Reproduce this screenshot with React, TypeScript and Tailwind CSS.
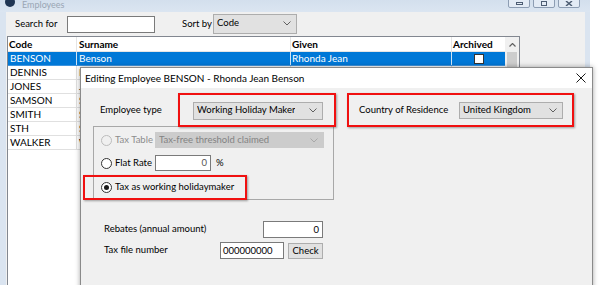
import React from 'react';

const Chevron = ({ color = '#606060' }: { color?: string }) => (
  <svg width="8" height="5" viewBox="0 0 8 5" className="shrink-0">
    <path d="M0.5 0.5 L4 4 L7.5 0.5" fill="none" stroke={color} strokeWidth="1" />
  </svg>
);

const Combo = ({
  value,
  className,
  disabled,
}: {
  value: string;
  className: string;
  disabled?: boolean;
}) => (
  <div
    className={`flex items-center justify-between border pl-[3px] pr-[5px] ${
      disabled
        ? 'border-[#cccccc] bg-[#cccccc] text-[#838383]'
        : 'border-[#adadad] bg-[#e1e1e1] text-black'
    } ${className}`}
  >
    <span className="truncate">{value}</span>
    <Chevron color={disabled ? '#a8a8a8' : '#606060'} />
  </div>
);

const Radio = ({ checked, disabled }: { checked?: boolean; disabled?: boolean }) => (
  <span
    className={`flex h-[11px] w-[11px] shrink-0 items-center justify-center rounded-full border ${
      disabled ? 'border-[#bcbcbc] bg-[#f0f0f0]' : 'border-[#333333] bg-white'
    }`}
  >
    {checked && <span className="h-[5px] w-[5px] rounded-full bg-[#1a1a1a]" />}
  </span>
);

const rows = [
  { code: 'BENSON', surname: 'Benson', given: 'Rhonda Jean' },
  { code: 'DENNIS', surname: 'Dennis', given: '' },
  { code: 'JONES', surname: 'Jones', given: '' },
  { code: 'SAMSON', surname: 'Samson', given: '' },
  { code: 'SMITH', surname: 'Smith', given: '' },
  { code: 'STH', surname: 'Sth', given: '' },
  { code: 'WALKER', surname: 'Walker', given: '' },
];

const App = () => {
  return (
    <div className="relative h-[285px] w-[602px] overflow-hidden bg-white font-['Lato',sans-serif] text-[9.5px] text-black">
      {/* Employees window */}
      <div className="flex h-full w-[590px] flex-col bg-[#dae4f0]">
        <div className="flex h-[12px] items-start overflow-hidden bg-gradient-to-b from-[#d3dfed] to-[#dbe5f1]">
          <span className="-mt-[3px] ml-[5px] h-[10px] w-[10px] rounded-full bg-[#1f3553]" />
          <span className="ml-[7px] text-[9px] leading-[9px] text-[#9aa6b4]">Employees</span>
          <div className="-mt-[2px] ml-auto mr-[10px] flex gap-[3px]">
            <div className="flex h-[10px] w-[22px] items-end justify-center rounded-b-[2px] border border-[#8d9db3] bg-[#e3ebf5] pb-[2px]">
              <span className="h-[3px] w-[7px] border border-[#4d5d73]" />
            </div>
            <div className="flex h-[10px] w-[22px] items-end justify-center rounded-b-[2px] border border-[#8d9db3] bg-[#e3ebf5] pb-[1px]">
              <span className="h-[5px] w-[6px] border border-[#4d5d73]" />
            </div>
            <div className="flex h-[10px] w-[22px] items-end justify-center rounded-b-[2px] border border-[#8d9db3] bg-[#e3ebf5] pb-[1px]">
              <svg width="8" height="5" viewBox="0 0 8 5">
                <path d="M1 0 L7 5 M7 0 L1 5" stroke="#4d5d73" strokeWidth="1.5" />
              </svg>
            </div>
          </div>
        </div>
        <div className="ml-[6px] mr-[5px] flex flex-1 flex-col bg-[#f0f0f0]">
          <div className="flex h-[24px] items-center">
            <span className="ml-[9px] w-[52px]">Search for</span>
            <div className="h-[17px] w-[88px] border border-[#7a7a7a] bg-white" />
            <span className="ml-[27px] w-[31px]">Sort by</span>
            <Combo value="Code" className="-mt-[1px] h-[20px] w-[84px]" />
          </div>
          <div className="ml-[1px] flex w-[513px] flex-1 border-l border-t border-r border-[#828790] bg-white text-[10px]">
            <div className="flex flex-1 flex-col">
              <div className="flex h-[15px] border-b border-[#e5e5e5] font-bold">
                <div className="w-[69px] border-r border-[#e5e5e5] pl-[1px] leading-[15px]">Code</div>
                <div className="w-[214px] border-r border-[#e5e5e5] pl-[2px] leading-[15px]">Surname</div>
                <div className="w-[161px] border-r border-[#e5e5e5] pl-[1px] leading-[15px]">Given</div>
                <div className="w-[53px] pl-[1px] leading-[15px]">Archived</div>
              </div>
              {rows.map((r, i) => (
                <div
                  key={r.code}
                  className={`flex h-[14px] border-b ${
                    i === 0 ? 'border-[#3d94df] bg-[#0078d7] text-white' : 'border-[#e0e0e0]'
                  }`}
                >
                  <div className={`w-[69px] border-r pl-[2px] leading-[13px] ${i === 0 ? 'border-[#cfe3f5]' : 'border-[#e0e0e0]'}`}>
                    {r.code}
                  </div>
                  <div className={`w-[214px] border-r pl-[2px] leading-[13px] ${i === 0 ? 'border-[#cfe3f5]' : 'border-[#e0e0e0]'}`}>
                    {r.surname}
                  </div>
                  <div className={`w-[161px] border-r pl-[1px] leading-[13px] ${i === 0 ? 'border-[#cfe3f5]' : 'border-[#e0e0e0]'}`}>
                    {r.given}
                  </div>
                  <div className="flex w-[53px] items-center justify-center">
                    <span className="h-[10px] w-[10px] border border-[#333333] bg-white" />
                  </div>
                </div>
              ))}
            </div>
            <div className="flex w-[15px] flex-col bg-[#f0f0f0]">
              <div className="flex h-[15px] items-center justify-center">
                <svg width="7" height="4" viewBox="0 0 7 4">
                  <path d="M0.5 3.5 L3.5 0.5 L6.5 3.5" fill="none" stroke="#606060" strokeWidth="1.2" />
                </svg>
              </div>
              <div className="mx-[2px] flex-1 bg-[#cdcdcd]" />
            </div>
          </div>
        </div>
      </div>

      {/* Edit dialog */}
      <div className="absolute left-[80px] top-[67px] flex h-[232px] w-[513px] flex-col border border-[#8a8a8a] bg-[#f0f0f0] shadow-[0_0_5px_rgba(0,0,0,0.35)]">
        <div className="flex h-[20px] items-center justify-between bg-white pl-[4px] pr-[6px]">
          <span className="text-[10px]">Editing Employee BENSON - Rhonda Jean Benson</span>
          <svg width="10" height="10" viewBox="0 0 10 10">
            <path d="M0.5 0.5 L9.5 9.5 M9.5 0.5 L0.5 9.5" stroke="#1a1a1a" strokeWidth="1" />
          </svg>
        </div>
        <div className="flex flex-col pt-[13px]">
          <div className="ml-[19px] flex h-[19px] items-center">
            <span className="w-[93px]">Employee type</span>
            <Combo value="Working Holiday Maker" className="h-[18px] w-[130px]" />
            <span className="ml-[36px] w-[100px]">Country of Residence</span>
            <Combo value="United Kingdom" className="h-[17px] w-[104px]" />
          </div>
          <div className="ml-[12px] mt-[6px] flex h-[74px] w-[241px] flex-col border border-[#a8a8a8] pt-[5px]">
            <div className="flex h-[16px] items-center">
              <span className="ml-[7px]">
                <Radio disabled />
              </span>
              <span className="ml-[3px] w-[40px] text-[#8d8d8d]">Tax Table</span>
              <Combo disabled value="Tax-free threshold claimed" className="h-[16px] w-[169px]" />
            </div>
            <div className="mt-[7px] flex h-[16px] items-center">
              <span className="ml-[7px]">
                <Radio />
              </span>
              <span className="ml-[3px] w-[40px]">Flat Rate</span>
              <div className="h-[16px] w-[56px] border border-[#7a7a7a] bg-white pr-[3px] text-right leading-[14px] text-[#555555]">0</div>
              <span className="ml-[5px]">%</span>
            </div>
            <div className="mt-[8px] flex h-[16px] items-center">
              <span className="ml-[7px]">
                <Radio checked />
              </span>
              <span className="ml-[3px]">Tax as working holidaymaker</span>
            </div>
          </div>
          <div className="ml-[23px] mt-[21px] flex h-[17px] items-center">
            <span className="w-[159px]">Rebates (annual amount)</span>
            <div className="h-[17px] w-[60px] border border-[#7a7a7a] bg-white pr-[3px] text-right leading-[15px]">0</div>
          </div>
          <div className="ml-[23px] mt-[4px] flex h-[17px] items-center">
            <span className="w-[116px]">Tax file number</span>
            <div className="h-[17px] w-[64px] border border-[#7a7a7a] bg-white pl-[2px] leading-[15px]">000000000</div>
            <div className="ml-[4px] h-[16px] w-[35px] border border-[#adadad] bg-[#e1e1e1] text-center leading-[14px]">Check</div>
          </div>
        </div>

        {/* red annotation boxes */}
        <div className="absolute left-[97px] top-[25px] h-[34px] w-[158px] border-2 border-[#f01010] shadow-[1px_1px_2px_rgba(0,0,0,0.35)]" />
        <div className="absolute left-[266px] top-[25px] h-[34px] w-[227px] border-2 border-[#f01010] shadow-[1px_1px_2px_rgba(0,0,0,0.35)]" />
        <div className="absolute left-[2px] top-[107px] h-[25px] w-[164px] border-2 border-[#f01010] shadow-[1px_1px_2px_rgba(0,0,0,0.35)]" />
      </div>
    </div>
  );
};

export default App;
